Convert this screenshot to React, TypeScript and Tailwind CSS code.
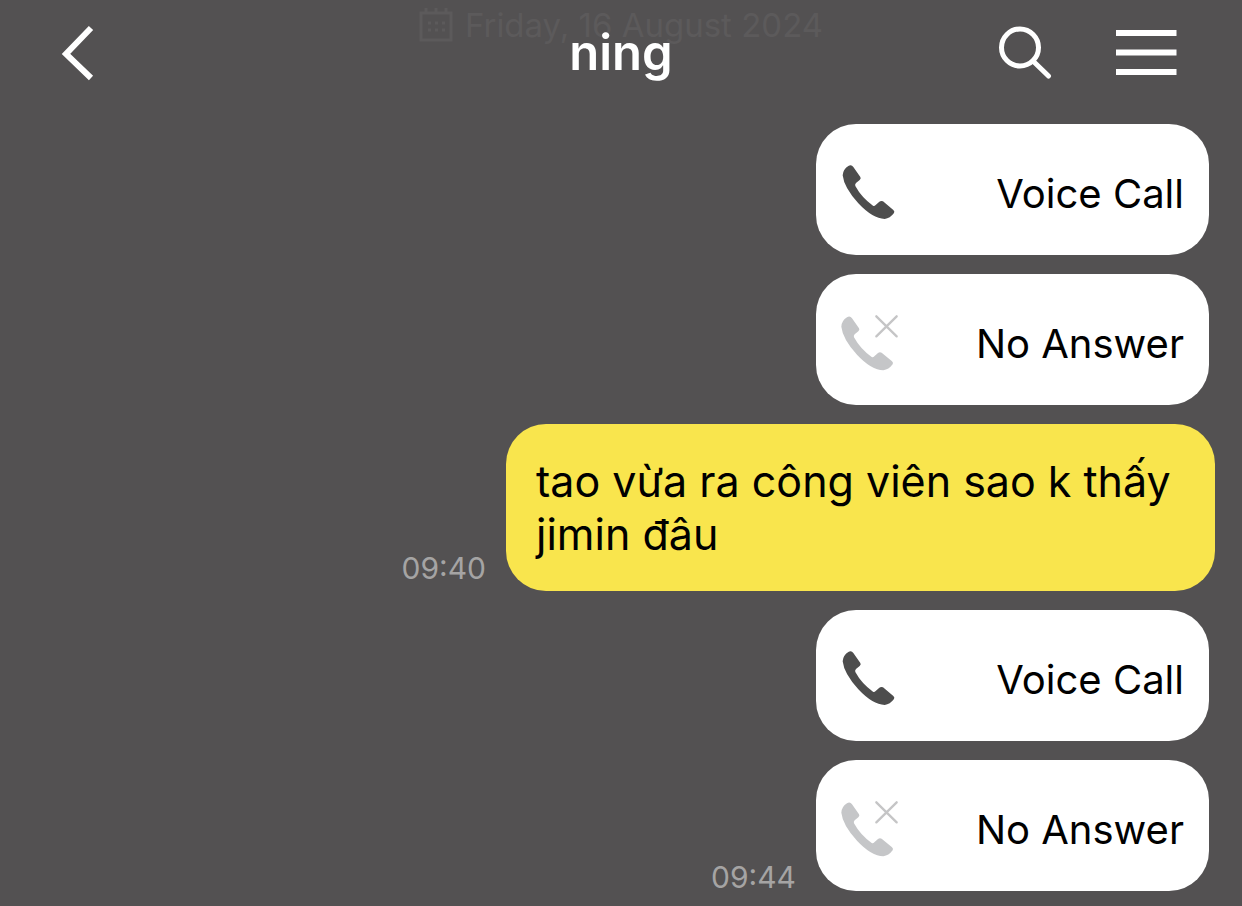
type Message =
  | { id: number; kind: "call"; label: string; missed: boolean; time?: string }
  | { id: number; kind: "text"; text: string; time?: string };

const messages: Message[] = [
  { id: 1, kind: "call", label: "Voice Call", missed: false },
  { id: 2, kind: "call", label: "No Answer", missed: true },
  { id: 3, kind: "text", text: "tao vừa ra công viên sao k thấy jimin đâu", time: "09:40" },
  { id: 4, kind: "call", label: "Voice Call", missed: false },
  { id: 5, kind: "call", label: "No Answer", missed: true, time: "09:44" },
];

const handset =
  "M115 150Q124 144 130 153L151 183Q154 188 149 192L138 201Q134 205 136 210Q155 245 189 269Q193 271 197 267L208 257Q213 253 219 256L250 282Q255 286 252 291Q240 307 224 309Q188 308 145 262Q102 215 98 178Q99 160 115 150Z";

function CallIcon({ missed }: { missed: boolean }) {
  return (
    <svg viewBox="93 126 192 192" className="size-16 shrink-0" aria-hidden="true">
      {missed ? (
        <>
          <path d={handset} transform="translate(-4 4)" fill="#c5c6c8" />
          <path d="M199 151L260 211M260 151L199 211" stroke="#c5c5c6" strokeWidth="7" strokeLinecap="round" />
        </>
      ) : (
        <path d={handset} fill="#4d4d4d" />
      )}
    </svg>
  );
}

function CalendarIcon() {
  return (
    <svg viewBox="0 0 34 34" className="size-[34px]" fill="none" stroke="currentColor" strokeWidth="3" aria-hidden="true">
      <path d="M2 5H32V32H2ZM7 0V5M17 0V5M27 0V5" />
      <path d="M9 15H12M16 15H19M23 15H26M9 22H12M16 22H19M23 22H26" />
    </svg>
  );
}

function Header() {
  return (
    <header className="relative grid h-[105px] grid-cols-[1fr_auto_1fr] items-center px-[60px]">
      <div className="absolute inset-x-0 top-1 flex items-center justify-center gap-3 text-[33px] leading-[42px] text-[#5c5a5b]">
        <CalendarIcon />
        <time dateTime="2024-08-16">Friday, 16 August 2024</time>
      </div>
      <button type="button" aria-label="Back" className="relative justify-self-start">
        <svg viewBox="0 0 36 56" className="h-14 w-9" fill="none" stroke="white" strokeWidth="6" aria-hidden="true">
          <path d="M31 3L6 29L31 53" />
        </svg>
      </button>
      <h1 className="relative text-[49px] leading-[60px] font-semibold text-white">ning</h1>
      <div className="relative flex items-center gap-16 justify-self-end pr-[5px]">
        <button type="button" aria-label="Search">
          <svg viewBox="0 0 54 54" className="size-[54px]" fill="none" stroke="white" strokeWidth="5" aria-hidden="true">
            <circle cx="22" cy="21.500" r="18.500" />
            <path d="M35 35L50.500 50" strokeLinecap="round" />
          </svg>
        </button>
        <button type="button" aria-label="Menu">
          <svg viewBox="0 0 61 46" className="h-[46px] w-[61px]" fill="white" aria-hidden="true">
            <path d="M0 0H60.500V6H0ZM0 19.500H60.500V25.500H0ZM0 39H60.500V45H0Z" />
          </svg>
        </button>
      </div>
    </header>
  );
}

function Row({ message }: { message: Message }) {
  if (message.kind === "text") {
    return (
      <li className="flex items-end justify-end gap-5 pr-[27px]">
        {message.time && <time className="pb-[9px] text-[30px] leading-7 text-[#a5a4a4]">{message.time}</time>}
        <p className="w-[709px] rounded-[40px] bg-[#f9e54d] px-[30px] pt-[31px] pb-[30px] text-[43px] leading-[53px] text-black">
          {message.text}
        </p>
      </li>
    );
  }
  return (
    <li className="flex items-end justify-end gap-5 pr-[33px]">
      {message.time && <time className="text-[30px] leading-7 text-[#a5a4a4]">{message.time}</time>}
      <div className="flex h-[131px] w-[393px] items-center justify-between rounded-[40px] bg-white px-[25px] text-[40px] text-black">
        <CallIcon missed={message.missed} />
        <span className="pt-2">{message.label}</span>
      </div>
    </li>
  );
}

export default function App() {
  return (
    <div className="flex min-h-screen flex-col bg-[#535152] font-['Inter','Liberation_Sans',sans-serif]">
      <Header />
      <main className="pt-[19px]">
        <ul className="flex flex-col gap-[19px]">
          {messages.map((message) => (
            <Row key={message.id} message={message} />
          ))}
        </ul>
      </main>
    </div>
  );
}
